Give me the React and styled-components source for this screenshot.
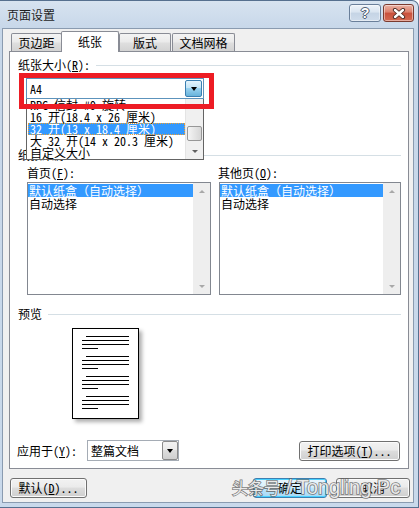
import React from 'react';
import styled, { createGlobalStyle } from 'styled-components';

const FONT = `"Noto Sans Mono CJK SC", "Noto Sans CJK SC", "Noto Sans", sans-serif`;

const Global = createGlobalStyle`
  html, body { margin: 0; padding: 0; }
  body {
    width: 419px; height: 508px; overflow: hidden; background: #fff;
    font-family: ${FONT}; font-size: 12px; color: #000;
  }
  #root { width: 419px; height: 508px; }
  u { text-decoration-thickness: 1px; text-underline-offset: 1px; }
`;

const Window = styled.div`
  position: relative;
  box-sizing: border-box;
  width: 419px; height: 508px;
  display: flex; flex-direction: column;
  background: linear-gradient(#d7e3f0, #c7d7e9 28px, #c9d9eb);
  border-top: 1px solid #56708f;
  border-right: 1px solid #56708f;
  border-bottom: 1px solid #56708f;
  border-top-right-radius: 7px;
  overflow: hidden;
`;

const TitleBar = styled.div`
  height: 27px; flex: none;
  display: flex; align-items: center; justify-content: space-between;
  padding-left: 7px; padding-right: 4px;
`;

const TitleText = styled.div`
  font-family: "Noto Sans CJK SC", sans-serif;
  font-size: 12px; line-height: 14px; color: #1e1e1e;
  margin-top: 1px;
`;

const CaptionButtons = styled.div`
  display: flex; gap: 2px; align-self: flex-start; margin-top: 3px;
`;

const CaptionButton = styled.div`
  box-sizing: border-box;
  width: ${p => p.$w}px; height: 18px;
  border: 1px solid ${p => (p.$close ? '#7a3a2f' : '#6a7f9a')};
  border-radius: 3px;
  background: ${p => (p.$close
    ? 'linear-gradient(#eab2a4, #dc7f6c 45%, #c9503c 50%, #d46a52)'
    : 'linear-gradient(#eef3f9, #d9e4f0 45%, #c5d4e5 50%, #cfdceb)')};
  box-shadow: inset 0 0 0 1px rgba(255,255,255,0.45);
  display: flex; align-items: center; justify-content: center;
`;

const HelpGlyph = styled.span`
  font-family: "Liberation Sans", sans-serif; font-weight: bold;
  font-size: 14px; line-height: 14px; color: #fff;
  text-shadow: 0 0 1px #3d4a5c, 1px 0 0 #56657a, -1px 0 0 #56657a, 0 1px 0 #56657a, 0 -1px 0 #56657a;
`;

const Client = styled.div`
  flex: 1;
  margin: 0 4px 4px 2px;
  border: 1px solid #8a9bb0;
  background: #f0f0f0;
  padding: 2px 3px 0 6px;
  display: flex; flex-direction: column;
`;

const TabStrip = styled.div`
  display: flex; align-items: flex-end;
  height: 21px; padding-left: 2px;
  margin-bottom: -1px;
  position: relative; z-index: 2;
`;

const Tab = styled.div`
  box-sizing: border-box;
  width: ${p => p.$w}px;
  height: ${p => (p.$active ? 21 : 18)}px;
  margin-bottom: ${p => (p.$active ? 0 : 1)}px;
  margin-left: ${p => p.$ml || 0}px;
  border: 1px solid #898c95; border-bottom: none;
  border-radius: 2px 2px 0 0;
  background: ${p => (p.$active ? '#fff' : 'linear-gradient(#f3f3f3, #ebebeb 45%, #dedede 55%, #d3d3d3)')};
  display: flex; align-items: center; justify-content: center;
  padding-top: ${p => (p.$active ? 0 : 1)}px;
  font-size: 12px; line-height: 12px;
  position: relative; z-index: ${p => (p.$active ? 2 : 1)};
`;

const Panel = styled.div`
  box-sizing: border-box;
  width: 400px; height: 418px;
  border: 1px solid #898c95;
  background: #fff;
  padding: 7px 7px 0 8px;
  display: flex; flex-direction: column;
  position: relative; z-index: 1;
`;

const SectionHeader = styled.div`
  display: flex; align-items: center; gap: 6px;
  height: 12px; line-height: 12px;
  margin-top: ${p => p.$mt || 0}px;
  white-space: nowrap;
`;

const Rule = styled.div`
  flex: 1; height: 1px; background: #d5dfe5;
`;

const ComboWrap = styled.div`
  position: relative;
  width: ${p => p.$w}px; height: 21px;
  margin-top: ${p => p.$mt || 0}px;
  margin-left: ${p => p.$ml || 0}px;
  flex: none;
`;

const ComboBox = styled.div`
  box-sizing: border-box;
  height: 100%;
  border: 1px solid ${p => (p.$hot ? '#5c93bc' : '#a5acb5')};
  background: #fff;
  display: flex; align-items: center;
`;

const ComboText = styled.div`
  flex: 1; padding-left: ${p => p.$pl || 3}px;
  line-height: 12px; white-space: nowrap; overflow: hidden;
`;

const DropButton = styled.div`
  box-sizing: border-box;
  width: ${p => p.$w}px; align-self: stretch;
  margin: ${p => p.$m}px;
  border: 1px solid ${p => (p.$hot ? '#3c7fb1' : '#8b8b8b')};
  border-radius: 2px;
  background: ${p => (p.$hot
    ? 'linear-gradient(#e5f4fc, #c4e5f6 45%, #98d1ef 50%, #68b3db)'
    : 'linear-gradient(#f2f2f2, #ebebeb 45%, #dddddd 50%, #cfcfcf)')};
  display: flex; align-items: center; justify-content: center;
`;

const Caret = styled.div`
  width: 0; height: 0;
  border-left: ${p => p.$size || 3.5}px solid transparent;
  border-right: ${p => p.$size || 3.5}px solid transparent;
  ${p => (p.$up ? 'border-bottom' : 'border-top')}: ${p => (p.$size ? p.$size - 0.5 : 4)}px solid ${p => p.$color || '#000'};
`;

const Dropdown = styled.div`
  position: absolute; top: 100%; left: 0; right: 0;
  height: 61px; box-sizing: border-box;
  border: 1px solid #646464; border-top: none;
  background: #fff;
  display: flex; z-index: 5;
`;

const DropItems = styled.div`
  flex: 1; overflow: hidden; padding-left: 1px;
`;

const DropItem = styled.div`
  box-sizing: border-box;
  height: 12px; line-height: 12px;
  padding-left: 2px; white-space: nowrap;
  background: ${p => (p.$selected ? '#3399ff' : 'transparent')};
  color: ${p => (p.$selected ? '#fff' : '#000')};
  outline: ${p => (p.$selected ? '1px dotted #f0a030' : 'none')};
  outline-offset: -1px;
`;

const ScrollBar = styled.div`
  width: 17px; flex: none;
  background: ${p => (p.$disabled ? '#eeeeee' : '#f0f0f0')};
  border-left: ${p => (p.$disabled ? 'none' : '1px solid #e4e4e4')};
  display: flex; flex-direction: column; align-items: center;
  justify-content: space-between;
  position: relative;
`;

const ScrollArrow = styled.div`
  height: 16px; width: 100%;
  display: flex; align-items: center; justify-content: center;
`;

const Thumb = styled.div`
  position: absolute; left: 1px; right: 1px;
  top: ${p => p.$top}px; height: ${p => p.$h}px;
  box-sizing: border-box;
  border: 1px solid #979797; border-radius: 2px;
  background: linear-gradient(90deg, #f5f5f5, #e5e5e5 50%, #d6d6d6);
`;

const Columns = styled.div`
  display: grid; grid-template-columns: 184px 1fr; column-gap: 8px;
  margin-top: 6px; padding-left: 9px;
`;

const Column = styled.div`
  display: flex; flex-direction: column;
`;

const FieldLabel = styled.div`
  height: 12px; line-height: 12px; white-space: nowrap;
  margin-left: ${p => p.$ml || 0}px;
`;

const ListBox = styled.div`
  box-sizing: border-box;
  height: 113px; margin-top: 3px;
  border: 1px solid #828790;
  background: #fff;
  display: flex;
`;

const ListItems = styled.div`
  flex: 1; padding-top: 1px;
`;

const ListItem = styled.div`
  height: 13px; line-height: 13px; padding-left: 1px;
  white-space: nowrap;
  background: ${p => (p.$selected ? '#3399ff' : 'transparent')};
  color: ${p => (p.$selected ? '#fff' : '#000')};
`;

const PreviewPage = styled.div`
  box-sizing: border-box;
  width: 67px; height: 91px;
  margin: 8px 0 0 54px;
  border: 1px solid #000;
  background: #fff;
  box-shadow: 3px 3px 4px rgba(0, 0, 0, 0.32);
  padding: 7px 9px 0 9px;
  display: flex; flex-direction: column; gap: 7px;
`;

const Para = styled.div`
  display: flex; flex-direction: column; gap: 3px;
`;

const TextLine = styled.div`
  height: 1px; background: #000;
  width: ${p => p.$w}px;
  margin-left: ${p => p.$indent || 0}px;
`;

const BottomRow = styled.div`
  display: flex; align-items: center;
  height: 21px; margin-top: 21px;
`;

const RowLabel = styled.div`
  width: 70px; margin-left: -1px; line-height: 12px; white-space: nowrap;
`;

const Button = styled.div`
  box-sizing: border-box;
  width: ${p => p.$w}px; height: ${p => p.$h || 20}px;
  margin-left: ${p => (p.$auto ? 'auto' : `${p.$ml || 0}px`)};
  margin-right: ${p => p.$mr || 0}px;
  border: 1px solid ${p => (p.$default ? '#3c7fb1' : '#707070')};
  border-radius: 3px;
  background: ${p => (p.$default
    ? 'linear-gradient(#eaf6fd, #d9f0fc 45%, #bee6fd 50%, #a7d9f5)'
    : 'linear-gradient(#f2f2f2, #ebebeb 45%, #dddddd 50%, #cfcfcf)')};
  box-shadow: inset 0 0 0 1px ${p => (p.$default ? '#48d1ff' : '#fbfbfb')};
  display: flex; align-items: center; justify-content: center;
  line-height: 12px; white-space: nowrap;
`;

const Footer = styled.div`
  display: flex; align-items: center;
  margin-top: 9px; height: 20px;
`;

const Annotation = styled.div`
  position: absolute; left: 19px; top: 72px;
  width: 195px; height: 36px; box-sizing: border-box;
  border: 5px solid #ed1c24;
  z-index: 10; pointer-events: none;
`;

const Watermark = styled.div`
  position: absolute; left: 232px; top: 475px;
  z-index: 10; pointer-events: none;
  display: flex; align-items: baseline; gap: 6px;
  color: rgba(255, 255, 255, 0.85);
  -webkit-text-stroke: 1.6px rgba(95, 95, 95, 0.8);
  paint-order: stroke fill;
  white-space: nowrap;
`;

const WmCjk = styled.span`
  font-family: "Noto Sans CJK SC", sans-serif; font-size: 16px; line-height: 22px;
`;

const WmLatin = styled.span`
  font-family: "Liberation Sans", sans-serif; font-size: 20px; line-height: 22px;
`;

const CloseIcon = () => (
  <svg width="14" height="11" viewBox="0 0 14 11">
    <path d="M3 2 L11 9 M11 2 L3 9" stroke="#4a2a24" strokeWidth="4.2" strokeLinecap="round" />
    <path d="M3 2 L11 9 M11 2 L3 9" stroke="#fff" strokeWidth="2.4" strokeLinecap="round" />
  </svg>
);

const paragraphs = [0, 1, 2, 3];

export default function App() {
  return (
    <>
      <Global />
      <Window>
        <TitleBar>
          <TitleText>页面设置</TitleText>
          <CaptionButtons>
            <CaptionButton $w={32}><HelpGlyph>?</HelpGlyph></CaptionButton>
            <CaptionButton $w={31} $close><CloseIcon /></CaptionButton>
          </CaptionButtons>
        </TitleBar>
        <Client>
          <TabStrip>
            <Tab $w={51}>页边距</Tab>
            <Tab $w={58} $ml={-1} $active>纸张</Tab>
            <Tab $w={52}>版式</Tab>
            <Tab $w={63} $ml={1}>文档网格</Tab>
          </TabStrip>
          <Panel>
            <SectionHeader>
              <span>纸张大小(<u>R</u>):</span>
              <Rule />
            </SectionHeader>
            <ComboWrap $w={178} $mt={7} $ml={8}>
              <ComboBox $hot>
                <ComboText $pl={3}>A4</ComboText>
                <DropButton $w={17} $m={1} $hot><Caret /></DropButton>
              </ComboBox>
              <Dropdown>
                <DropItems>
                  <DropItem>RPC 信封 #9 旋转</DropItem>
                  <DropItem>16 开(18.4 x 26 厘米)</DropItem>
                  <DropItem $selected>32 开(13 x 18.4 厘米)</DropItem>
                  <DropItem>大 32 开(14 x 20.3 厘米)</DropItem>
                  <DropItem>自定义大小</DropItem>
                </DropItems>
                <ScrollBar>
                  <ScrollArrow><Caret $up $size={3.5} $color="#606060" /></ScrollArrow>
                  <Thumb $top={27} $h={15} />
                  <ScrollArrow><Caret $size={3.5} $color="#606060" /></ScrollArrow>
                </ScrollBar>
              </Dropdown>
            </ComboWrap>
            <SectionHeader $mt={50}>
              <span>纸张来源</span>
              <Rule />
            </SectionHeader>
            <Columns>
              <Column>
                <FieldLabel>首页(<u>F</u>):</FieldLabel>
                <ListBox>
                  <ListItems>
                    <ListItem $selected>默认纸盒（自动选择）</ListItem>
                    <ListItem>自动选择</ListItem>
                  </ListItems>
                  <ScrollBar $disabled>
                    <ScrollArrow><Caret $up $size={3.5} $color="#a8a8a8" /></ScrollArrow>
                    <ScrollArrow><Caret $size={3.5} $color="#a8a8a8" /></ScrollArrow>
                  </ScrollBar>
                </ListBox>
              </Column>
              <Column>
                <FieldLabel $ml={-1}>其他页(<u>O</u>):</FieldLabel>
                <ListBox>
                  <ListItems>
                    <ListItem $selected>默认纸盒（自动选择）</ListItem>
                    <ListItem>自动选择</ListItem>
                  </ListItems>
                  <ScrollBar $disabled>
                    <ScrollArrow><Caret $up $size={3.5} $color="#a8a8a8" /></ScrollArrow>
                    <ScrollArrow><Caret $size={3.5} $color="#a8a8a8" /></ScrollArrow>
                  </ScrollBar>
                </ListBox>
              </Column>
            </Columns>
            <SectionHeader $mt={13}>
              <span>预览</span>
              <Rule />
            </SectionHeader>
            <PreviewPage>
              {paragraphs.map(i => (
                <Para key={i}>
                  <TextLine $w={43} $indent={4} />
                  <TextLine $w={47} />
                  <TextLine $w={47} />
                  <TextLine $w={16} />
                </Para>
              ))}
            </PreviewPage>
            <BottomRow>
              <RowLabel>应用于(<u>Y</u>):</RowLabel>
              <ComboWrap $w={92}>
                <ComboBox>
                  <ComboText $pl={3}>整篇文档</ComboText>
                  <DropButton $w={16} $m={0}><Caret /></DropButton>
                </ComboBox>
              </ComboWrap>
              <Button $w={101} $h={20} $auto $mr={1}>打印选项(<u>T</u>)...</Button>
            </BottomRow>
          </Panel>
          <Footer>
            <Button $w={77} $ml={1}>默认(<u>D</u>)...</Button>
            <Button $w={74} $auto $default>确定</Button>
            <Button $w={74} $ml={9}>取消</Button>
          </Footer>
        </Client>
        <Annotation />
        <Watermark>
          <WmCjk>头条号</WmCjk>
          <WmLatin>/ Tongling Pc</WmLatin>
        </Watermark>
      </Window>
    </>
  );
}
